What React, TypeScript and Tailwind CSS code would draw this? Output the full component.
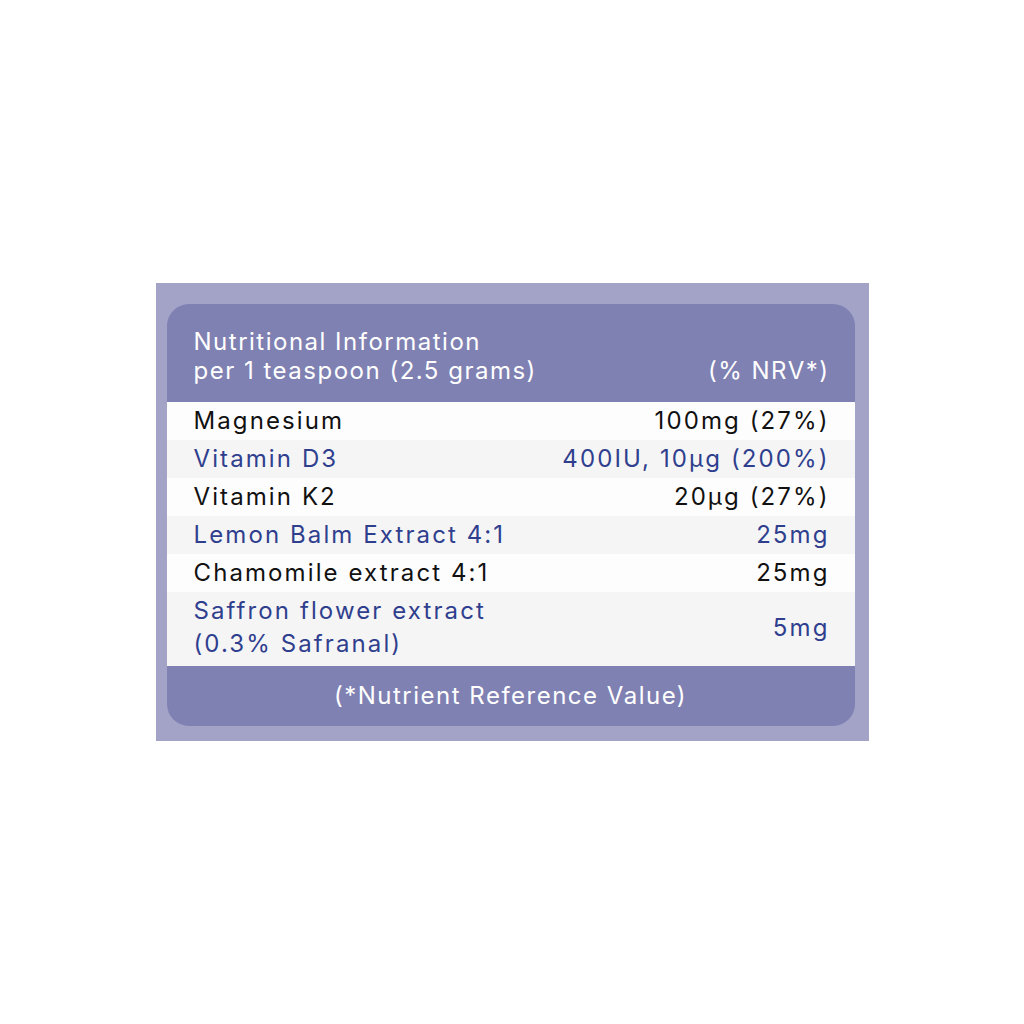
import React from "react";

type Row = { name: React.ReactNode; value: string; blue: boolean; tall?: boolean };

const rows: Row[] = [
  { name: "Magnesium", value: "100mg (27%)", blue: false },
  { name: "Vitamin D3", value: "400IU, 10µg (200%)", blue: true },
  { name: "Vitamin K2", value: "20µg (27%)", blue: false },
  { name: "Lemon Balm Extract 4:1", value: "25mg", blue: true },
  { name: "Chamomile extract 4:1", value: "25mg", blue: false },
  {
    name: (
      <>
        Saffron flower extract
        <br />
        (0.3% Safranal)
      </>
    ),
    value: "5mg",
    blue: true,
    tall: true,
  },
];

export default function App() {
  return (
    <div className="w-[1024px] h-[1024px] bg-white flex items-start justify-center pt-[283px] font-['Inter',sans-serif]">
      <div className="w-[713px] h-[458px] bg-[#a3a3c8] pt-[21px] pl-[11px] pr-[14px]">
        <div className="rounded-[22px] overflow-hidden bg-[#7f81b2]">
          {/* header */}
          <div className="h-[98px] flex items-end justify-between pl-[27px] pr-[25px] pb-[17px] text-white text-[24px] leading-[29px] tracking-[1.5px]">
            <div>
              Nutritional Information
              <br />
              per 1 teaspoon (2.5 grams)
            </div>
            <div>(% NRV*)</div>
          </div>
          {/* rows */}
          <div>
            {rows.map((r, i) => (
              <div
                key={i}
                className={`flex items-center justify-between pl-[27px] pr-[25px] text-[24px] tracking-[2.1px] ${
                  r.tall ? "h-[74px] leading-[33px] pb-[4px]" : "h-[38px] leading-[38px]"
                } ${i % 2 === 0 ? "bg-[#fefdfe]" : "bg-[#f6f5f6]"} ${
                  r.blue ? "text-[#2f3f8e]" : "text-[#111111]"
                }`}
              >
                <div>{r.name}</div>
                <div>{r.value}</div>
              </div>
            ))}
          </div>
          {/* footer */}
          <div className="h-[60px] flex items-center justify-center text-white text-[24px] tracking-[1.5px]">
            (*Nutrient Reference Value)
          </div>
        </div>
      </div>
    </div>
  );
}
